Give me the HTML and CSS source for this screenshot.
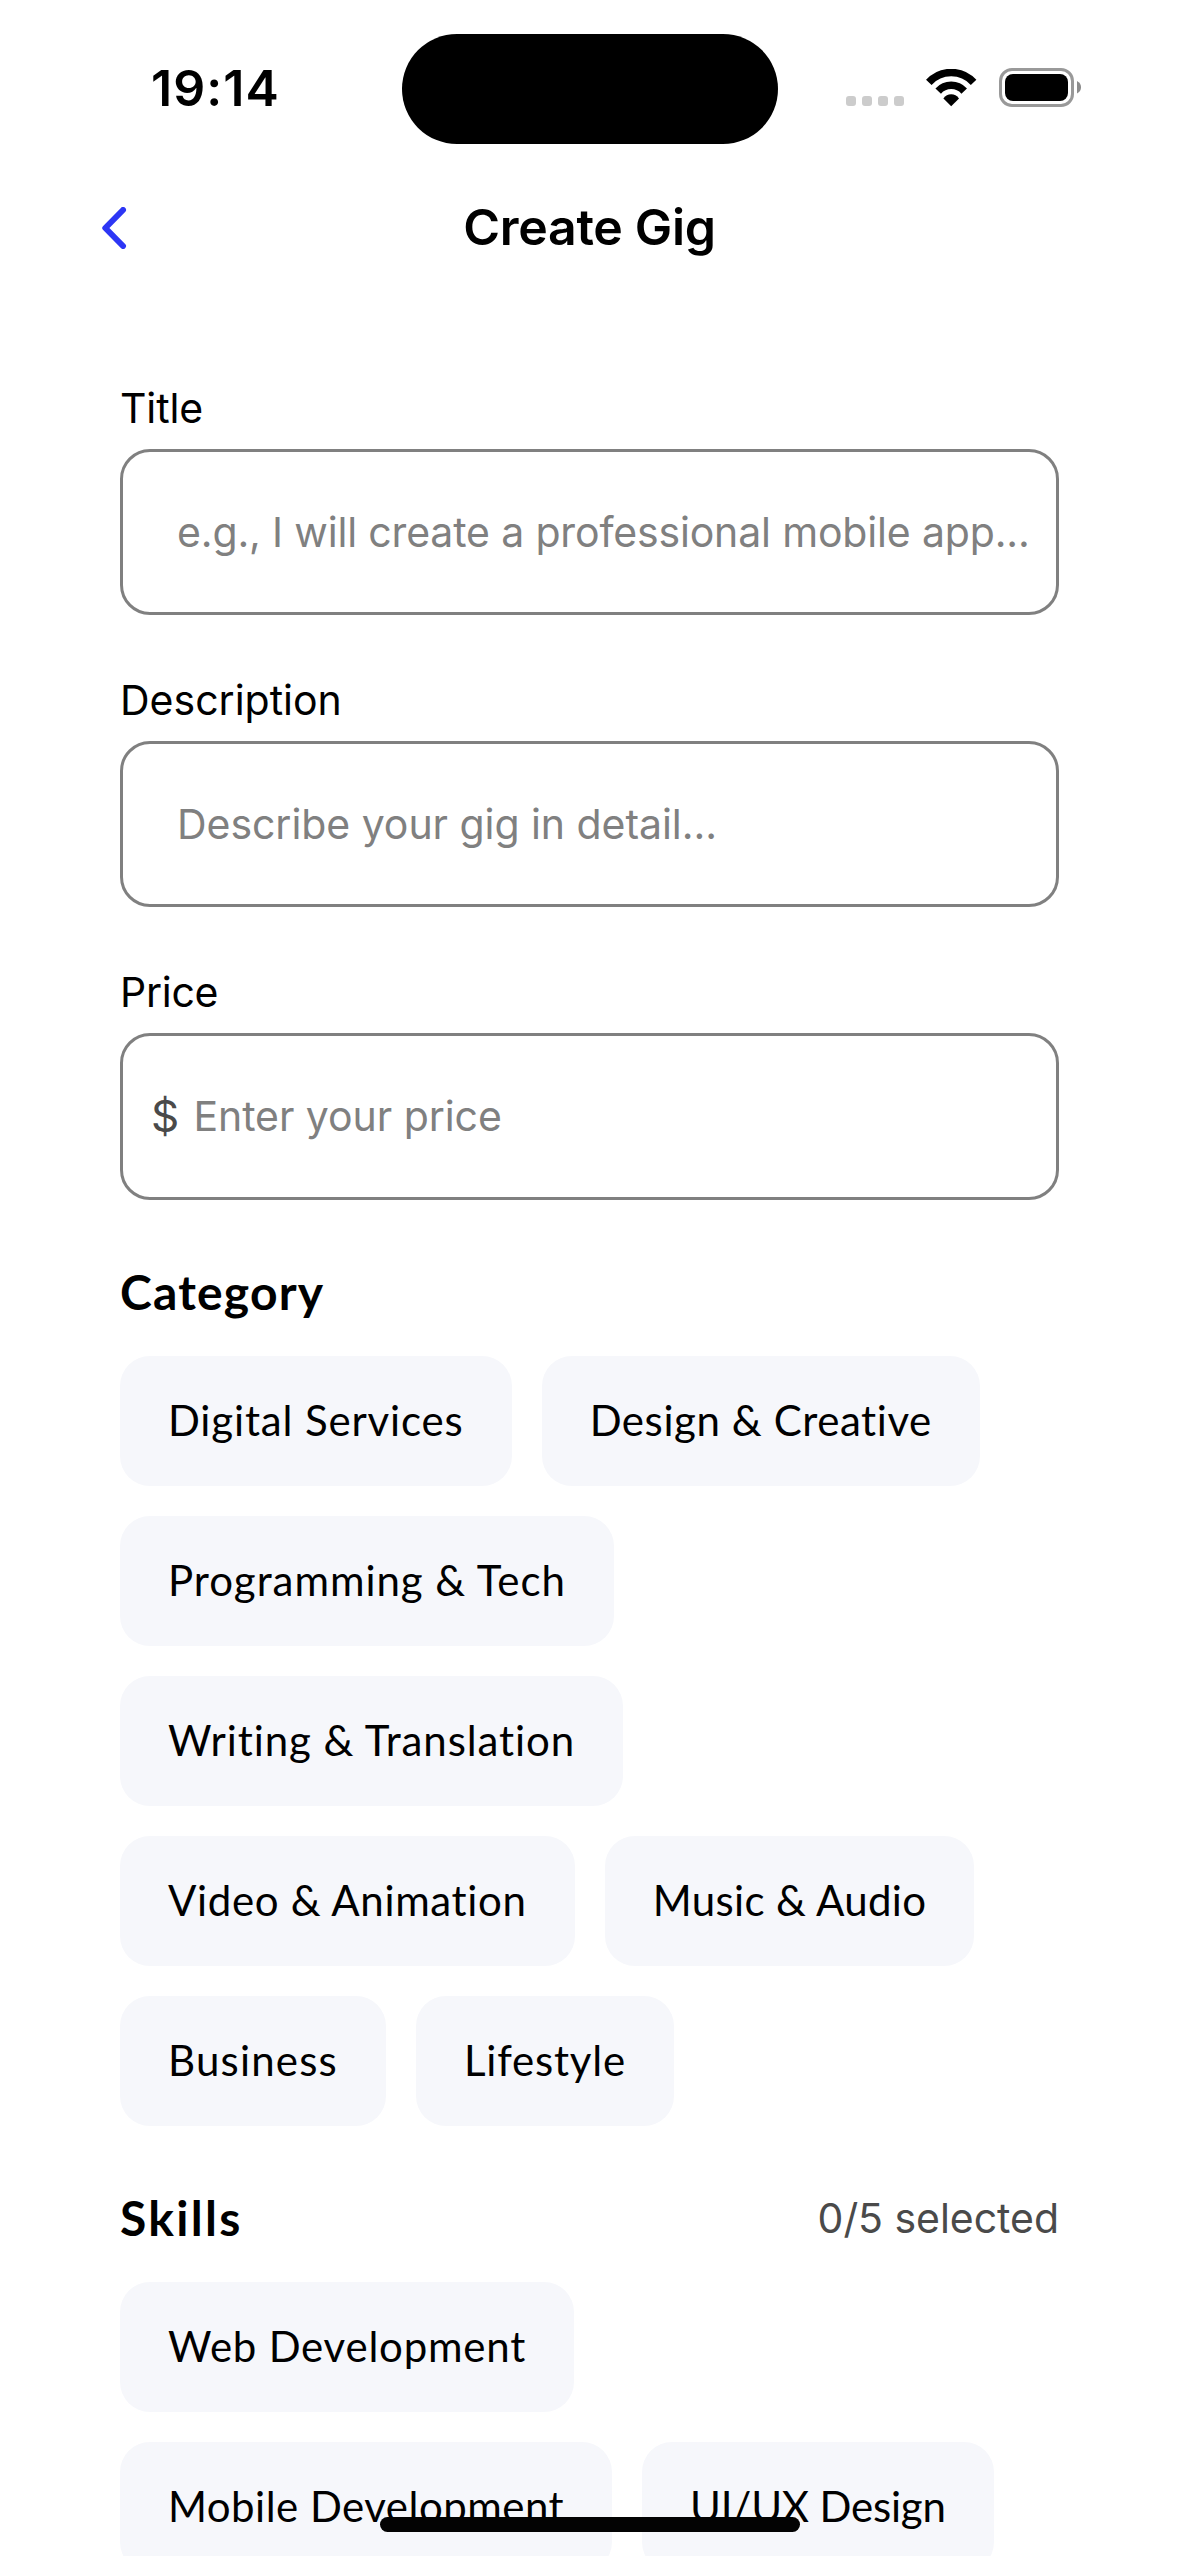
FILE: index.html
```
<!DOCTYPE html>
<html lang="en">
<head>
<meta charset="utf-8">
<title>Create Gig</title>
<link rel="stylesheet" href="styles.css">
</head>
<body>
<div class="screen">
  <header class="status-bar">
    <span class="time">19:14</span>
    <div class="island"></div>
    <div class="status-icons">
      <div class="signal"><i class="dot"></i><i class="dot"></i><i class="dot"></i><i class="dot"></i></div>
      <svg class="wifi" width="51" height="38" viewBox="0 0 51 38">
        <g fill="none" stroke="#000" stroke-width="7.5">
          <path d="M2.8 13.4A30.3 30.3 0 0 1 47.6 13.4"/>
          <path d="M12.2 22.1A17.6 17.6 0 0 1 38.2 22.1"/>
        </g>
        <path d="M25.2 37.2L17.4 29.4Q20.5 25.2 25.2 25.2T33 29.4Z"/>
      </svg>
      <svg class="battery" width="82" height="39" viewBox="0 0 82 39">
        <rect x="1.5" y="1.5" width="72" height="36" rx="11.5" fill="none" stroke="#999" stroke-width="3"/>
        <rect x="6" y="6" width="63" height="27" rx="8"/>
        <path d="M78 13Q82 15 82 19.2T78 25.4Z" fill="#8c8c8c"/>
      </svg>
    </div>
  </header>

  <nav class="nav">
    <svg class="back" width="26" height="42" viewBox="0 0 26 42">
      <path d="M21 3L3.3 21L21 39" fill="none" stroke="#2d36f5" stroke-width="6" stroke-linecap="round" stroke-linejoin="round"/>
    </svg>
    <h1 class="nav-title">Create Gig</h1>
  </nav>

  <main class="form">
    <div class="field">
      <label class="label label-title">Title</label>
      <div class="input"><span class="placeholder placeholder-title">e.g., I will create a professional mobile app...</span></div>
    </div>
    <div class="field">
      <label class="label">Description</label>
      <div class="input"><span class="placeholder">Describe your gig in detail...</span></div>
    </div>
    <div class="field">
      <label class="label label-price">Price</label>
      <div class="input input-price"><span class="currency">$</span><span class="placeholder">Enter your price</span></div>
    </div>

    <section class="section">
      <div class="section-head"><h2 class="heading heading-category">Category</h2></div>
      <div class="chips">
        <span class="chip chip-digital">Digital Services</span>
        <span class="chip chip-design">Design &amp; Creative</span>
        <span class="chip chip-programming">Programming &amp; Tech</span>
        <span class="chip chip-writing">Writing &amp; Translation</span>
        <span class="chip chip-video">Video &amp; Animation</span>
        <span class="chip chip-music">Music &amp; Audio</span>
        <span class="chip chip-business">Business</span>
        <span class="chip">Lifestyle</span>
      </div>
    </section>

    <section class="section">
      <div class="section-head"><h2 class="heading heading-skills">Skills</h2><span class="count">0/5 selected</span></div>
      <div class="chips">
        <span class="chip">Web Development</span>
        <span class="chip chip-mobile">Mobile Development</span>
        <span class="chip chip-uiux">UI/UX Design</span>
      </div>
    </section>
  </main>
  <div class="home-indicator"></div>
</div>
</body>
</html>
```
FILE: styles.css
```
* { box-sizing: border-box; }
body { margin: 0; background: #fff; }

.screen {
  position: relative;
  width: 1179px;
  height: 2556px;
  overflow: hidden;
  background: #fff;
  color: #000;
  font-family: Inter, "Liberation Sans", sans-serif;
}

/* Status bar */
.status-bar {
  display: flex;
  align-items: flex-start;
  height: 177px;
  padding: 34px 0 0 151px;
}
.time {
  width: 251px;
  font-size: 50px;
  font-weight: 600;
  line-height: 108px;
  letter-spacing: 1.1px;
}
.island {
  width: 376px;
  height: 110px;
  border-radius: 55px;
  background: #000;
}
.status-icons {
  display: flex;
  align-items: flex-end;
  gap: 22px;
  margin: 34px 0 0 68px;
  height: 39px;
}
.signal {
  display: flex;
  gap: 6px;
  margin-bottom: 1px;
}
.dot {
  width: 10px;
  height: 10px;
  border-radius: 3px;
  background: #ccc;
}
.wifi, .battery { display: block; }

/* Navigation */
.nav {
  display: grid;
  grid-template-columns: 102px 1fr 102px;
  align-items: center;
  height: 100px;
}
.back {
  grid-column: 2;
  grid-row: 1;
  margin-top: 2px;
}
.nav-title {
  grid-column: 2;
  grid-row: 1;
  justify-self: center;
  margin: 0;
  font-size: 50px;
  font-weight: 600;
  line-height: 60px;
  letter-spacing: -0.32px;
}

/* Fields */
.form { padding: 106px 120px 0; }
.field { margin-bottom: 60px; }
.label {
  display: block;
  height: 50px;
  margin-bottom: 16px;
  font-size: 41px;
  line-height: 50px;
}
.label-title { letter-spacing: -0.1px; }
.label-price { letter-spacing: -0.25px; }
.input {
  display: flex;
  align-items: center;
  height: 166px;
  padding-left: 54px;
  border: 3px solid #808080;
  border-radius: 30px;
}
.input-price {
  height: 167px;
  padding: 0 0 2px 28px;
}
.placeholder {
  color: #808080;
  font-size: 41px;
  line-height: 50px;
  letter-spacing: -0.05px;
  white-space: nowrap;
}
.placeholder-title { letter-spacing: -0.16px; }
.currency {
  width: 42.4px;
  color: #4a4a4a;
  font-size: 44px;
  line-height: 50px;
}

/* Chip sections */
.section { margin-top: 61px; }
.section-head {
  display: flex;
  align-items: center;
  justify-content: space-between;
  height: 60px;
  margin-bottom: 35px;
}
.heading {
  margin: 0;
  padding-top: 2px;
  font-family: Lato, "Open Sans", sans-serif;
  font-size: 48px;
  font-weight: 700;
  line-height: 60px;
}
.heading-category { letter-spacing: 1.2px; }
.heading-skills { letter-spacing: 2.3px; }
.count {
  padding: 2px 0 0;
  color: #4a4a4a;
  font-size: 41px;
  line-height: 50px;
  letter-spacing: -0.04px;
}
.chips {
  display: flex;
  flex-wrap: wrap;
  gap: 30px;
}
.chip {
  height: 130px;
  padding: 0 48px;
  border-radius: 30px;
  background: #f6f7fb;
  font-family: Lato, "Open Sans", sans-serif;
  font-size: 42px;
  line-height: 128px;
  letter-spacing: 0.78px;
  white-space: nowrap;
}
.chip-digital { letter-spacing: 0.85px; }
.chip-design { letter-spacing: 0.58px; }
.chip-programming { letter-spacing: 0.96px; }
.chip-writing { letter-spacing: 0.9px; }
.chip-video { letter-spacing: 0.66px; }
.chip-music { letter-spacing: 0.36px; }
.chip-business { letter-spacing: 1.2px; }
.chip-mobile { letter-spacing: 0.48px; }
.chip-uiux { letter-spacing: -0.18px; }

.home-indicator {
  position: absolute;
  left: 380px;
  top: 2517px;
  width: 420px;
  height: 15px;
  border-radius: 8px;
  background: #030303;
}
```
